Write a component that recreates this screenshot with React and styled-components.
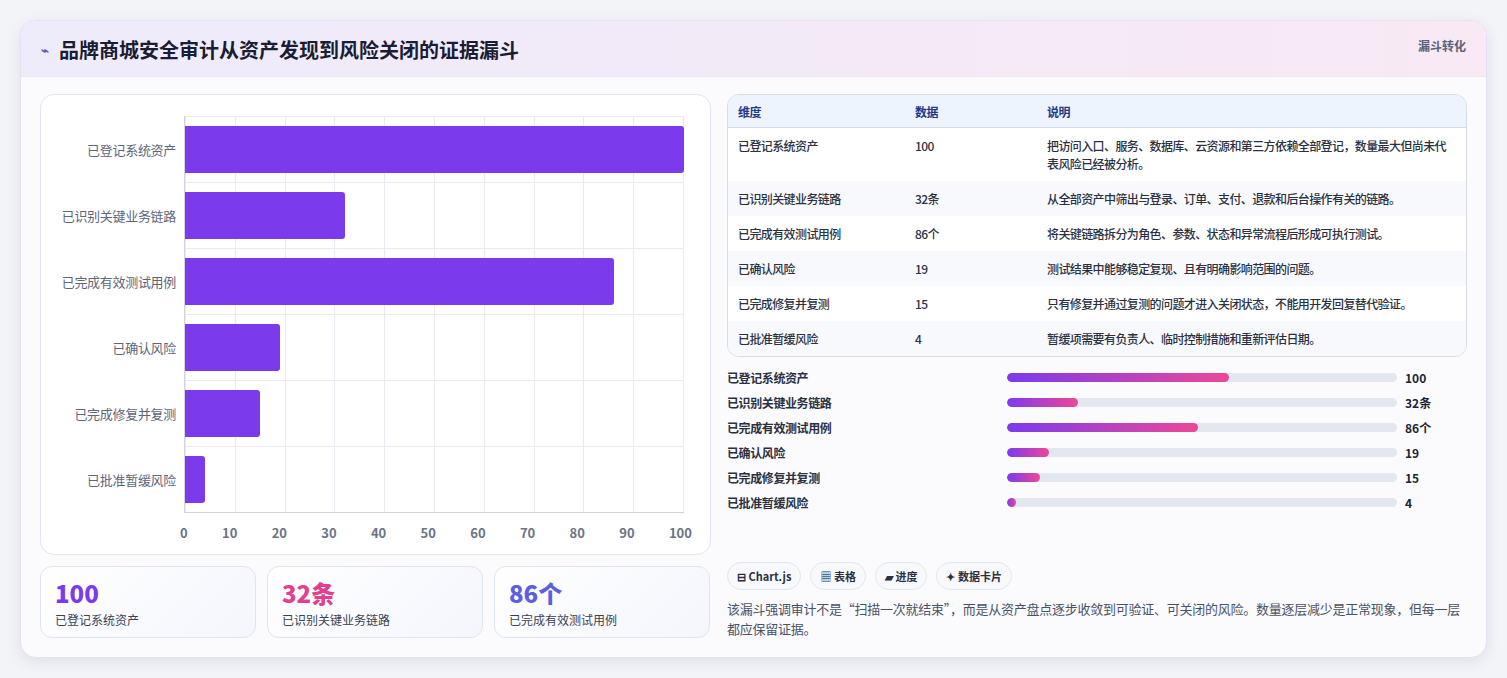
import styled, { createGlobalStyle } from "styled-components";

const GlobalStyle = createGlobalStyle`
  body {
    margin: 0;
    background: #f3f4f8;
    font-family: "Noto Sans CJK SC", "Noto Sans", sans-serif;
  }
`;

const rows = [
    { name: "已登记系统资产", value: 100, text: "100", desc: "把访问入口、服务、数据库、云资源和第三方依赖全部登记，数量最大但尚未代表风险已经被分析。" },
    { name: "已识别关键业务链路", value: 32, text: "32条", desc: "从全部资产中筛出与登录、订单、支付、退款和后台操作有关的链路。" },
    { name: "已完成有效测试用例", value: 86, text: "86个", desc: "将关键链路拆分为角色、参数、状态和异常流程后形成可执行测试。" },
    { name: "已确认风险", value: 19, text: "19", desc: "测试结果中能够稳定复现、且有明确影响范围的问题。" },
    { name: "已完成修复并复测", value: 15, text: "15", desc: "只有修复并通过复测的问题才进入关闭状态，不能用开发回复替代验证。" },
    { name: "已批准暂缓风险", value: 4, text: "4", desc: "暂缓项需要有负责人、临时控制措施和重新评估日期。" },
];

const ticks = [0, 10, 20, 30, 40, 50, 60, 70, 80, 90, 100];

const App = () => {
    return (
        <>
            <GlobalStyle />
            <Page>
                <Card>
                    <Header>
                        <Title>
                            <Bolt>⌁</Bolt>品牌商城安全审计从资产发现到风险关闭的证据漏斗
                        </Title>
                        <Badge>漏斗转化</Badge>
                    </Header>
                    <Body>
                        <LeftCol>
                            <ChartBox>
                                <ChartGrid>
                                    <Labels>
                                        {rows.map((r) => (
                                            <Label key={r.name}>{r.name}</Label>
                                        ))}
                                    </Labels>
                                    <Plot>
                                        <GridLines>
                                            {ticks.map((t) => (
                                                <VLine key={t} />
                                            ))}
                                        </GridLines>
                                        {rows.map((r) => (
                                            <BarRow key={r.name}>
                                                <Bar style={{ width: `${r.value}%` }} />
                                            </BarRow>
                                        ))}
                                    </Plot>
                                    <span />
                                    <Ticks>
                                        {ticks.map((t) => (
                                            <Tick key={t}>{t}</Tick>
                                        ))}
                                    </Ticks>
                                </ChartGrid>
                            </ChartBox>
                            <Kpis>
                                <Kpi>
                                    <KpiNum color="#7c3aed">100</KpiNum>
                                    <KpiLabel>已登记系统资产</KpiLabel>
                                </Kpi>
                                <Kpi>
                                    <KpiNum color="#e0408f">32条</KpiNum>
                                    <KpiLabel>已识别关键业务链路</KpiLabel>
                                </Kpi>
                                <Kpi>
                                    <KpiNum color="#5b5fe0">86个</KpiNum>
                                    <KpiLabel>已完成有效测试用例</KpiLabel>
                                </Kpi>
                            </Kpis>
                        </LeftCol>
                        <RightCol>
                            <TableBox>
                                <Table>
                                    <colgroup>
                                        <col style={{ width: 177 }} />
                                        <col style={{ width: 132 }} />
                                        <col />
                                    </colgroup>
                                    <thead>
                                        <tr>
                                            <Th>维度</Th>
                                            <Th>数据</Th>
                                            <Th>说明</Th>
                                        </tr>
                                    </thead>
                                    <tbody>
                                        {rows.map((r, i) => (
                                            <Tr key={r.name} $alt={i % 2 === 1}>
                                                <Td>{r.name}</Td>
                                                <Td>{r.text}</Td>
                                                <Td>{r.desc}</Td>
                                            </Tr>
                                        ))}
                                    </tbody>
                                </Table>
                            </TableBox>
                            <Progress>
                                {rows.map((r) => (
                                    <ProgRow key={r.name}>
                                        <ProgName>{r.name}</ProgName>
                                        <Track>
                                            <Fill style={{ width: `${r.value * 0.57}%` }} />
                                        </Track>
                                        <ProgVal>{r.text}</ProgVal>
                                    </ProgRow>
                                ))}
                            </Progress>
                            <Tags>
                                <Tag>⊟ Chart.js</Tag>
                                <Tag>▦ 表格</Tag>
                                <Tag>▰ 进度</Tag>
                                <Tag>✦ 数据卡片</Tag>
                            </Tags>
                            <Note>
                                该漏斗强调审计不是“扫描一次就结束”，而是从资产盘点逐步收敛到可验证、可关闭的风险。数量逐层减少是正常现象，但每一层都应保留证据。
                            </Note>
                        </RightCol>
                    </Body>
                </Card>
            </Page>
        </>
    );
};

export default App;

const Page = styled.div`
    padding: 20px;
    height: 678px;
    box-sizing: border-box;
    background: #f3f4f8;
`;

const Card = styled.div`
    width: 1467px;
    height: 638px;
    box-sizing: border-box;
    background: #fbfbfe;
    border: 1px solid #e3e2f3;
    border-radius: 16px;
    box-shadow: 0 4px 14px rgba(80, 80, 140, 0.12);
    overflow: hidden;
    display: flex;
    flex-direction: column;
`;

const Header = styled.div`
    height: 55px;
    flex-shrink: 0;
    display: flex;
    justify-content: space-between;
    align-items: flex-start;
    padding: 0 20px;
    background: linear-gradient(90deg, #eeebfb, #f8e9f4);
    border-bottom: 1px solid #ebe6f4;
`;

const Title = styled.h1`
    margin: 0;
    margin-top: 14px;
    font-size: 20px;
    font-weight: 700;
    color: #1a1d33;
    display: flex;
    align-items: center;
    gap: 10px;
`;

const Bolt = styled.span`
    color: #4f5fd8;
    font-size: 13px;
`;

const Badge = styled.div`
    margin-top: 16px;
    font-size: 12px;
    font-weight: 700;
    color: #5b6478;
`;

const Body = styled.div`
    flex: 1;
    display: flex;
    gap: 16px;
    padding: 17px 19px 18px 19px;
`;

const LeftCol = styled.div`
    width: 671px;
    display: flex;
    flex-direction: column;
    gap: 11px;
`;

const ChartBox = styled.div`
    height: 461px;
    box-sizing: border-box;
    background: #fff;
    border: 1px solid #e1e5ef;
    border-radius: 14px;
    padding: 21px 26px 8px 14px;
`;

const ChartGrid = styled.div`
    display: grid;
    grid-template-columns: 129px 1fr;
    grid-template-rows: 397px auto;
    height: 100%;
`;

const Labels = styled.div`
    display: flex;
    flex-direction: column;
    padding-right: 8px;
`;

const Label = styled.div`
    flex: 1;
    display: flex;
    align-items: center;
    justify-content: flex-end;
    font-size: 13px;
    color: #5e6678;
    letter-spacing: -0.3px;
`;

const Plot = styled.div`
    position: relative;
    display: flex;
    flex-direction: column;
    border-left: 1px solid #cfd4de;
    border-bottom: 1px solid #cfd4de;
`;

const GridLines = styled.div`
    position: absolute;
    inset: 0;
    display: flex;
    justify-content: space-between;
`;

const VLine = styled.div`
    width: 1px;
    background: #e8ebf1;
`;

const BarRow = styled.div`
    flex: 1;
    position: relative;
    display: flex;
    align-items: center;
    border-top: 1px solid #e8ebf1;
`;

const Bar = styled.div`
    height: 47px;
    background: #7c3aed;
    border-radius: 0 3px 3px 0;
`;

const Ticks = styled.div`
    display: flex;
    justify-content: space-between;
    margin: 10px -8px 0 -4px;
`;

const Tick = styled.span`
    font-size: 13px;
    font-weight: 700;
    color: #6b7385;
`;

const Kpis = styled.div`
    display: grid;
    grid-template-columns: repeat(3, 216px);
    gap: 11px;
`;

const Kpi = styled.div`
    height: 72px;
    box-sizing: border-box;
    background: linear-gradient(135deg, #ffffff, #f4f6fd);
    border: 1px solid #dfe4ef;
    border-radius: 12px;
    padding: 12px 14px;
`;

const KpiNum = styled.div`
    font-size: 24px;
    font-weight: 800;
    line-height: 28px;
    color: ${(p) => p.color};
`;

const KpiLabel = styled.div`
    font-size: 12px;
    color: #3a4154;
    margin-top: 4px;
`;

const RightCol = styled.div`
    flex: 1;
    display: flex;
    flex-direction: column;
`;

const TableBox = styled.div`
    border: 1px solid #d6dbe6;
    border-radius: 12px;
    overflow: hidden;
    background: #fff;
`;

const Table = styled.table`
    width: 100%;
    table-layout: fixed;
    border-collapse: collapse;
    font-size: 12px;
    letter-spacing: -0.6px;
`;

const Th = styled.th`
    text-align: left;
    font-weight: 700;
    color: #1e3a8a;
    background: #eef4fe;
    height: 32px;
    padding: 0 10px;
    border-bottom: 1px solid #d6dbe6;
`;

const Tr = styled.tr`
    background: ${(p) => (p.$alt ? "#f8f9fd" : "#fff")};
    & + & td {
        border-top: 1px solid #e3e7ef;
    }
`;

const Td = styled.td`
    vertical-align: top;
    padding: 9px 10px 8px;
    color: #2b3142;
    font-weight: 500;
    line-height: 18px;
`;

const Progress = styled.div`
    margin-top: 11px;
    display: flex;
    flex-direction: column;
    gap: 7px;
`;

const ProgRow = styled.div`
    display: grid;
    grid-template-columns: 272px 390px 1fr;
    gap: 8px;
    align-items: center;
    height: 18px;
`;

const ProgName = styled.div`
    font-size: 12px;
    font-weight: 700;
    color: #2b3142;
    letter-spacing: -0.4px;
`;

const Track = styled.div`
    height: 9px;
    background: #e3e7ef;
    border-radius: 5px;
    overflow: hidden;
`;

const Fill = styled.div`
    height: 100%;
    border-radius: 5px;
    background: linear-gradient(90deg, #7c3aed, #ec4899);
`;

const ProgVal = styled.div`
    font-size: 12px;
    font-weight: 700;
    color: #1f2433;
`;

const Tags = styled.div`
    margin-top: auto;
    display: flex;
    gap: 9px;
`;

const Tag = styled.div`
    height: 28px;
    box-sizing: border-box;
    padding: 0 9px;
    display: flex;
    align-items: center;
    border-radius: 14px;
    border: 1px solid #e3e6ee;
    background: #f8f9fc;
    font-size: 11px;
    font-weight: 700;
    color: #2b3142;
`;

const Note = styled.p`
    margin: 9px 0 0;
    font-size: 13px;
    line-height: 20px;
    color: #4a5266;
    letter-spacing: -0.25px;
`;
